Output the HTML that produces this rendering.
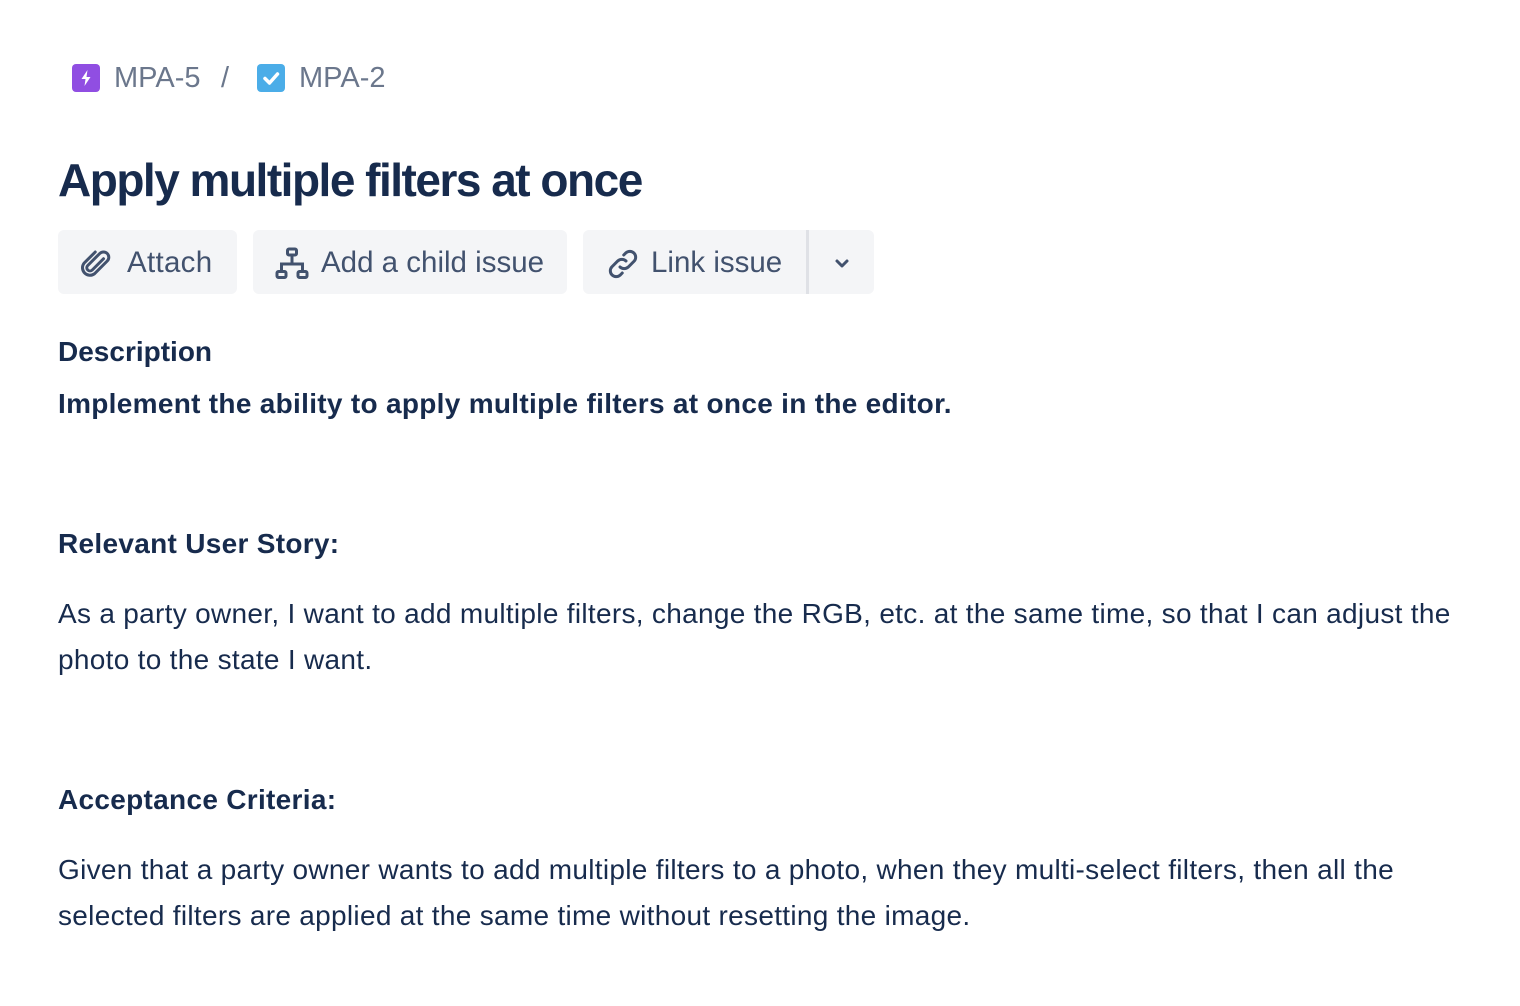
<!DOCTYPE html>
<html><head><meta charset="utf-8"><style>
body{margin:0;width:1520px;height:1006px;background:#fff;font-family:"Liberation Sans",sans-serif;color:#172b4d;position:relative;overflow:hidden}
.a{position:absolute;white-space:nowrap}
.bc{font-size:29px;color:#6b778c;top:62px}
.btn{position:absolute;top:230px;height:64px;background:#f4f5f7;border-radius:6px;color:#42526e;font-size:29.5px;line-height:66px}
.btn svg{position:absolute;top:16px}
.btn span{position:absolute;top:0}
.t{font-size:28px;letter-spacing:0.3px}
.b{font-weight:bold}
</style></head><body>
<div class="a" style="left:72px;top:64px;width:28px;height:28px;background:#904ee2;border-radius:4px">
<svg width="28" height="28" viewBox="0 0 28 28"><path d="M15.5 6 L9.5 15 H13.5 L12.5 22 L18.5 13 H14.5 Z" fill="#fff"/></svg></div>
<div class="a bc" style="left:114px">MPA-5</div>
<div class="a bc" style="left:221px">/</div>
<div class="a" style="left:257px;top:64px;width:28px;height:28px;background:#4bade8;border-radius:4px">
<svg width="28" height="28" viewBox="0 0 28 28"><path d="M8 14.5 L12.5 19 L20.5 10" stroke="#fff" stroke-width="3.5" fill="none" stroke-linecap="round" stroke-linejoin="round"/></svg></div>
<div class="a bc" style="left:299px">MPA-2</div>
<div class="a b" style="left:58px;top:153px;font-size:46px;letter-spacing:-1.5px">Apply multiple filters at once</div>

<div class="btn" style="left:58px;width:179px">
<svg style="left:20px" width="36" height="36" viewBox="0 0 24 24"><path d="M17 8.5 L9.5 16 a2 2 0 0 1 -3 -3 L14.5 5 a3.5 3.5 0 0 1 5 5 L11 18.5 a5 5 0 0 1 -7 -7 L11.5 4" fill="none" stroke="#42526e" stroke-width="2" stroke-linecap="round"/></svg>
<span style="left:69px;letter-spacing:0.3px">Attach</span></div>
<div class="btn" style="left:253px;width:314px">
<svg style="left:20px" width="38" height="36" viewBox="0 0 24 24"><rect x="9" y="2" width="6" height="4" rx="1" fill="none" stroke="#42526e" stroke-width="2"/><rect x="2" y="17" width="6" height="4" rx="1" fill="none" stroke="#42526e" stroke-width="2"/><rect x="16" y="17" width="6" height="4" rx="1" fill="none" stroke="#42526e" stroke-width="2"/><path d="M12 6v6M5 17v-5h14v5" fill="none" stroke="#42526e" stroke-width="2"/></svg>
<span style="left:68px">Add a child issue</span></div>
<div class="btn" style="left:583px;width:291px">
<svg style="left:22px" width="36" height="36" viewBox="0 0 24 24"><path d="M10 14 a4 4 0 0 0 5.5 0 l4 -4 a3.9 3.9 0 0 0 -5.5 -5.5 l-1.5 1.5 M14 10 a4 4 0 0 0 -5.5 0 l-4 4 a3.9 3.9 0 0 0 5.5 5.5 l1.5 -1.5" fill="none" stroke="#42526e" stroke-width="2" stroke-linecap="round"/></svg>
<span style="left:68px">Link issue</span>
<div style="position:absolute;left:223px;top:0;width:3px;height:64px;background:#dfe1e6"></div>
<svg style="left:250px;top:24px" width="18" height="18" viewBox="0 0 18 18"><path d="M4 7 L9 12 L14 7" fill="none" stroke="#42526e" stroke-width="3" stroke-linecap="round" stroke-linejoin="round"/></svg>
</div>

<div class="a b t" style="left:58px;top:336px;letter-spacing:0">Description</div>
<div class="a b t" style="left:58px;top:388px">Implement the ability to apply multiple filters at once in the editor.</div>
<div class="a b t" style="left:58px;top:528px">Relevant User Story:</div>
<div class="a t" style="left:58px;top:598px">As a party owner, I want to add multiple filters, change the RGB, etc. at the same time, so that I can adjust the</div>
<div class="a t" style="left:58px;top:644px">photo to the state I want.</div>
<div class="a b t" style="left:58px;top:784px">Acceptance Criteria:</div>
<div class="a t" style="left:58px;top:854px">Given that a party owner wants to add multiple filters to a photo, when they multi-select filters, then all the</div>
<div class="a t" style="left:58px;top:900px">selected filters are applied at the same time without resetting the image.</div>
</body></html>
